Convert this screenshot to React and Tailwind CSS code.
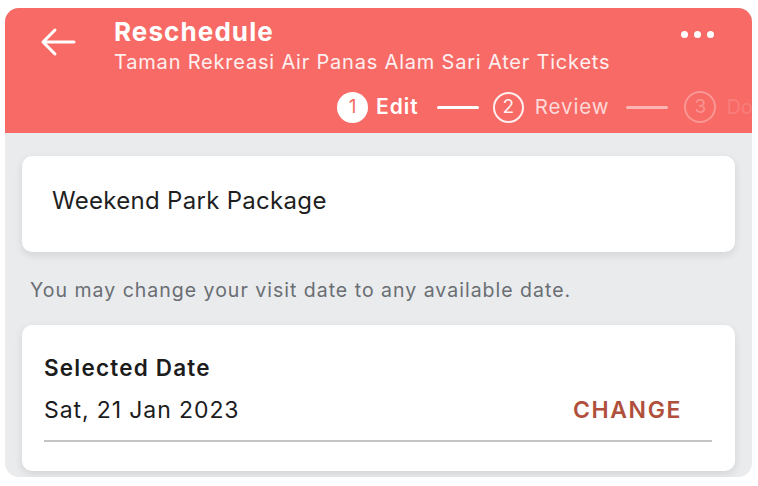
export default function App() {
  return (
    <div className="w-[758px] h-[486px] bg-white pt-2 px-[5px] font-['Inter',sans-serif]">
      <div className="w-[747px] h-[469px] rounded-[14px] overflow-hidden bg-[#e9ebed] flex flex-col">
        {/* Header */}
        <div className="h-[125px] bg-[#f76a66] text-white flex flex-col">
          <div className="flex items-start pt-[7px]">
            <div className="w-[109px] pl-[35px] pt-[12px]">
              <svg width="36" height="30" viewBox="0 0 36 30" fill="none" stroke="white" strokeWidth="3" strokeLinecap="round" strokeLinejoin="round">
                <path d="M34 15H3M15 3L3 15l12 12" />
              </svg>
            </div>
            <div className="flex-1">
              <div className="text-[26px] font-bold leading-[34px] tracking-[1.1px]">Reschedule</div>
              <div className="text-[20px] leading-[26px] tracking-[0.8px] text-white/90">Taman Rekreasi Air Panas Alam Sari Ater Tickets</div>
            </div>
            <div className="flex gap-[6px] pt-[16px] pr-[38px]">
              <span className="w-[7px] h-[7px] rounded-full bg-white" />
              <span className="w-[7px] h-[7px] rounded-full bg-white" />
              <span className="w-[7px] h-[7px] rounded-full bg-white" />
            </div>
          </div>
          {/* Stepper */}
          <div className="flex items-center pl-[332px] mt-[16px] h-[32px] whitespace-nowrap overflow-hidden [&>*]:shrink-0">
            <span className="w-[31px] h-[31px] rounded-full bg-white text-[#f76a66] flex items-center justify-center text-[19px]">1</span>
            <span className="ml-[8px] text-[21px] font-semibold tracking-[1px]">Edit</span>
            <span className="ml-[18px] w-[42px] h-[3px] bg-white rounded" />
            <span className="ml-[14px] w-[31px] h-[31px] rounded-full border-2 border-white/90 flex items-center justify-center text-[19px] text-white/90">2</span>
            <span className="ml-[11px] text-[20.5px] tracking-[0.9px] text-white/75">Review</span>
            <span className="ml-[17px] w-[42px] h-[3px] bg-white/50 rounded" />
            <span className="ml-[16px] w-[32px] h-[32px] rounded-full border-2 border-white/30 flex items-center justify-center text-[19px] text-white/30">3</span>
            <span className="ml-[10px] text-[20px] text-white/15">Done</span>
          </div>
        </div>

        {/* Body */}
        <div className="flex-1 px-[17px] pt-[23px]">
          <div className="h-[96px] bg-white rounded-[10px] shadow-[0_3px_8px_rgba(0,0,0,0.10)] flex items-center pl-[30px] pb-[6px]">
            <span className="text-[24px] tracking-[0.3px] text-[#1f1f1f] leading-none">Weekend Park Package</span>
          </div>
          <div className="mt-[25px] pl-[8px] text-[19.5px] tracking-[1px] text-[#6a6e73] leading-[26px]">
            You may change your visit date to any available date.
          </div>
          <div className="mt-[22px] h-[146px] bg-white rounded-[10px] shadow-[0_3px_8px_rgba(0,0,0,0.10)] px-[22px] pt-[28px]">
            <div className="text-[22.5px] font-semibold tracking-[1.2px] text-[#1c1c1c] leading-[30px]">Selected Date</div>
            <div className="flex items-center justify-between pr-[31px] mt-[11px] h-[32px]">
              <span className="text-[23px] tracking-[0.9px] text-[#1c1c1c]">Sat, 21 Jan 2023</span>
              <span className="text-[23px] font-semibold tracking-[1.6px] text-[#b0503c]">CHANGE</span>
            </div>
            <div className="mt-[14px] mr-[1px] h-[2px] bg-[#c2c4c6]" />
          </div>
        </div>
      </div>
    </div>
  )
}
